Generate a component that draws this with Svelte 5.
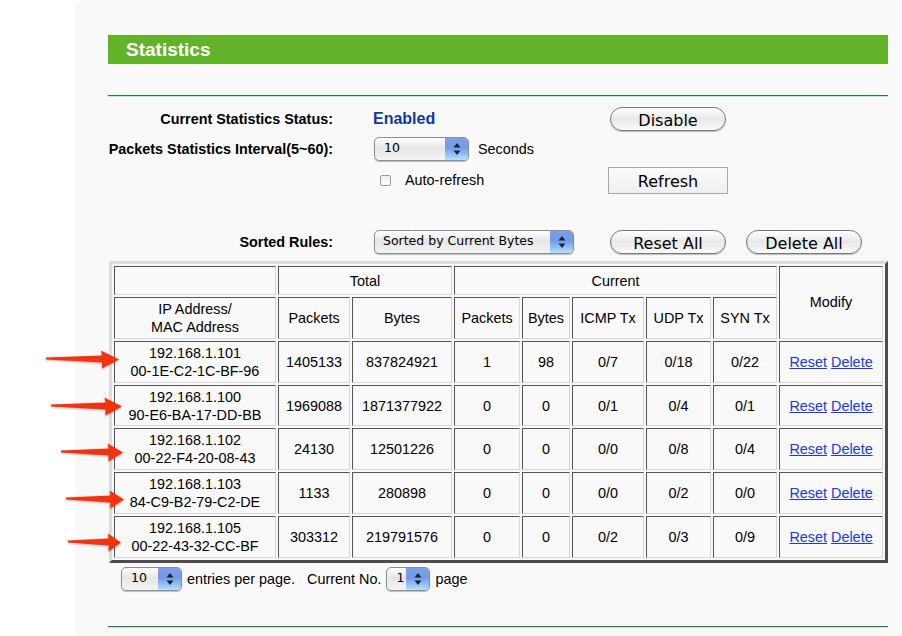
<script lang="ts">
  const rows = [
    { ip: '192.168.1.101', mac: '00-1E-C2-1C-BF-96', packets: 1405133, bytes: 837824921, curPackets: 1, curBytes: 98, icmp: '0/7', udp: '0/18', syn: '0/22' },
    { ip: '192.168.1.100', mac: '90-E6-BA-17-DD-BB', packets: 1969088, bytes: 1871377922, curPackets: 0, curBytes: 0, icmp: '0/1', udp: '0/4', syn: '0/1' },
    { ip: '192.168.1.102', mac: '00-22-F4-20-08-43', packets: 24130, bytes: 12501226, curPackets: 0, curBytes: 0, icmp: '0/0', udp: '0/8', syn: '0/4' },
    { ip: '192.168.1.103', mac: '84-C9-B2-79-C2-DE', packets: 1133, bytes: 280898, curPackets: 0, curBytes: 0, icmp: '0/0', udp: '0/2', syn: '0/0' },
    { ip: '192.168.1.105', mac: '00-22-43-32-CC-BF', packets: 303312, bytes: 219791576, curPackets: 0, curBytes: 0, icmp: '0/2', udp: '0/3', syn: '0/9' }
  ];

  const arrows = [
    { x: 46, y: 349, w: 73 },
    { x: 51, y: 396, w: 71 },
    { x: 61, y: 442, w: 62 },
    { x: 66, y: 489, w: 58 },
    { x: 68, y: 532, w: 53 }
  ];

  const colWidths = [162, 72, 100, 66, 48, 72, 65, 64, 104];
</script>

<div class="page">
  <main class="panel">
    <h1 class="title">Statistics</h1>
    <hr class="rule" />

    <div class="form">
      <div class="label">Current Statistics Status:</div>
      <div class="enabled">Enabled</div>
      <button class="pill">Disable</button>

      <div class="label">Packets Statistics Interval(5~60):</div>
      <div class="inline">
        <div class="select interval">
          <span>10</span>
          {@render stepper()}
        </div>
        <span class="seconds">Seconds</span>
      </div>
      <div></div>

      <div></div>
      <label class="auto"><input type="checkbox" /> <span>Auto-refresh</span></label>
      <button class="square">Refresh</button>
    </div>

    <div class="sorted">
      <div class="label">Sorted Rules:</div>
      <div class="select sort">
        <span>Sorted by Current Bytes</span>
        {@render stepper()}
      </div>
      <button class="pill reset">Reset All</button>
      <button class="pill delete">Delete All</button>
    </div>

    <table class="stats">
      <colgroup>
        {#each colWidths as w}
          <col style="width: {w}px" />
        {/each}
      </colgroup>
      <thead>
        <tr class="head1">
          <th></th>
          <th colspan="2">Total</th>
          <th colspan="5">Current</th>
          <th rowspan="2" class="modify">Modify</th>
        </tr>
        <tr class="head2">
          <th>IP Address/<br />MAC Address</th>
          <th>Packets</th>
          <th>Bytes</th>
          <th>Packets</th>
          <th>Bytes</th>
          <th>ICMP Tx</th>
          <th>UDP Tx</th>
          <th>SYN Tx</th>
        </tr>
      </thead>
      <tbody>
        {#each rows as r}
          <tr>
            <td>{r.ip}<br />{r.mac}</td>
            <td>{r.packets}</td>
            <td>{r.bytes}</td>
            <td>{r.curPackets}</td>
            <td>{r.curBytes}</td>
            <td>{r.icmp}</td>
            <td>{r.udp}</td>
            <td>{r.syn}</td>
            <td><a href="#reset">Reset</a> <a href="#delete">Delete</a></td>
          </tr>
        {/each}
      </tbody>
    </table>

    <div class="paging">
      <div class="select small">
        <span>10</span>
        {@render stepper()}
      </div>
      <span class="entries">entries per page.</span>
      <span class="current">Current No.</span>
      <div class="select tiny">
        <span>1</span>
        {@render stepper()}
      </div>
      <span>page</span>
    </div>

    <hr class="rule bottom" />
  </main>

  {#each arrows as a}
    <svg class="arrow" style="left: {a.x}px; top: {a.y}px; width: {a.w}px" height="22" viewBox="0 0 73 22" preserveAspectRatio="none">
      <path d="M0 8.5 L56 6.5 L55 1.5 L73 10.5 L56 19.5 L56 13.5 L0 10.5 Z" fill="#f2330f" />
    </svg>
  {/each}
</div>

{#snippet stepper()}
  <span class="stepper">
    <svg width="8" height="14" viewBox="0 0 8 14">
      <path d="M4 1 L7.5 5.5 H0.5 Z M4 13 L0.5 8.5 H7.5 Z" fill="#1a2233" />
    </svg>
  </span>
{/snippet}

<style>
  :global(body) {
    background: #fff;
  }

  .page {
    position: relative;
    width: 902px;
    height: 636px;
    overflow: hidden;
    font-family: "Liberation Sans", Arial, sans-serif;
    color: #000;
  }

  .panel {
    margin-left: 75px;
    height: 636px;
    box-sizing: border-box;
    padding: 35px 14px 0 33px;
    background: #f9f9fa;
    border-top-left-radius: 8px;
  }

  .title {
    margin: 0;
    height: 29px;
    padding-left: 18px;
    background: #62b32a;
    color: #fff;
    font-size: 19px;
    font-weight: 700;
    line-height: 29px;
  }

  .rule {
    margin: 31px 0 0;
    height: 2px;
    border: 0;
    background: linear-gradient(#1f7a50 50%, #cfe0d8 50%);
  }

  .form {
    display: grid;
    grid-template-columns: 225px 197px auto;
    grid-template-rows: 30px 30px 32px;
    column-gap: 40px;
    margin-top: 7px;
    align-items: center;
  }

  .form > button {
    justify-self: start;
  }

  .label {
    justify-self: end;
    font-size: 14.4px;
    font-weight: 700;
    white-space: nowrap;
  }

  .sorted .label {
    width: 225px;
    text-align: right;
    margin-right: 41px;
  }

  .enabled {
    font-size: 16px;
    font-weight: 700;
    color: #0d3a9b;
  }

  .inline {
    display: flex;
    align-items: center;
    gap: 9px;
    margin-left: 1px;
  }

  .seconds {
    font-size: 14.4px;
  }

  .select {
    display: flex;
    justify-content: space-between;
    box-sizing: border-box;
    height: 24px;
    padding-left: 9px;
    border: 1px solid #8e8e8e;
    border-radius: 5px;
    background: linear-gradient(#fff, #e6e6e6 45%, #f4f4f4);
    box-shadow: 0 1px 1px rgba(0, 0, 0, 0.25);
    font-family: "DejaVu Sans", sans-serif;
    font-size: 12.5px;
    line-height: 20px;
    overflow: hidden;
  }

  .interval {
    width: 95px;
  }

  .sort {
    width: 200px;
    margin-right: 36px;
    padding-left: 8px;
  }

  .small {
    width: 61px;
  }

  .tiny {
    width: 44px;
  }

  .stepper {
    display: flex;
    align-items: center;
    justify-content: center;
    width: 23px;
    background: linear-gradient(#7e9fe6, #6f9ce6 45%, #b5e0fc);
  }

  .auto {
    display: flex;
    align-items: center;
    gap: 14px;
    padding-left: 7px;
    font-size: 14.4px;
  }

  .auto input {
    appearance: none;
    width: 11px;
    height: 11px;
    margin: 0;
    border: 1px solid #9a9a9a;
    border-radius: 2px;
    background: linear-gradient(#eee, #fff);
  }

  .pill {
    box-sizing: border-box;
    width: 116px;
    height: 24px;
    padding: 2px 0 0;
    border: 1px solid #777;
    border-radius: 12px;
    background: linear-gradient(#fff, #e8e8e8 50%, #fafafa);
    box-shadow: 0 1px 1px rgba(0, 0, 0, 0.25);
    color: #000;
    font-family: "DejaVu Sans", sans-serif;
    font-size: 16px;
  }

  .square {
    box-sizing: border-box;
    width: 120px;
    height: 27px;
    padding: 3px 0 0;
    margin-left: -2px;
    border: 1px solid #a8a8a8;
    background: linear-gradient(#fafafa, #f0f0f0);
    color: #000;
    font-family: "DejaVu Sans", sans-serif;
    font-size: 16px;
  }

  .sorted {
    display: flex;
    align-items: center;
    margin-top: 34px;
  }

  .reset {
    margin-right: 20px;
  }

  .stats {
    table-layout: fixed;
    width: 778px;
    margin: 7px 0 0 1px;
    border-collapse: separate;
    border-spacing: 2px;
    border: 3px solid;
    border-color: #dcdcdc #4c4c4c #4c4c4c #dcdcdc;
    font-size: 14.4px;
  }

  .stats th,
  .stats td {
    padding: 0;
    border: 1px solid;
    border-color: #555 #d8d8d8 #d8d8d8 #555;
    font-weight: 400;
    text-align: center;
    line-height: 18px;
  }

  .head1 th {
    height: 27px;
  }

  .head2 th {
    height: 40px;
  }

  .stats .modify {
    padding-bottom: 2px;
  }

  .stats td {
    height: 40px;
  }

  .stats tbody tr:nth-child(2) td {
    height: 39px;
  }

  .stats a {
    color: #1738e6;
  }

  .paging {
    display: flex;
    align-items: center;
    gap: 5px;
    margin: 4px 0 0 13px;
    font-size: 14.4px;
  }

  .current {
    margin-left: 7px;
  }

  .bottom {
    margin-top: 35px;
  }

  .arrow {
    position: absolute;
    filter: drop-shadow(0 1px 1px rgba(0, 0, 0, 0.3));
  }
</style>
